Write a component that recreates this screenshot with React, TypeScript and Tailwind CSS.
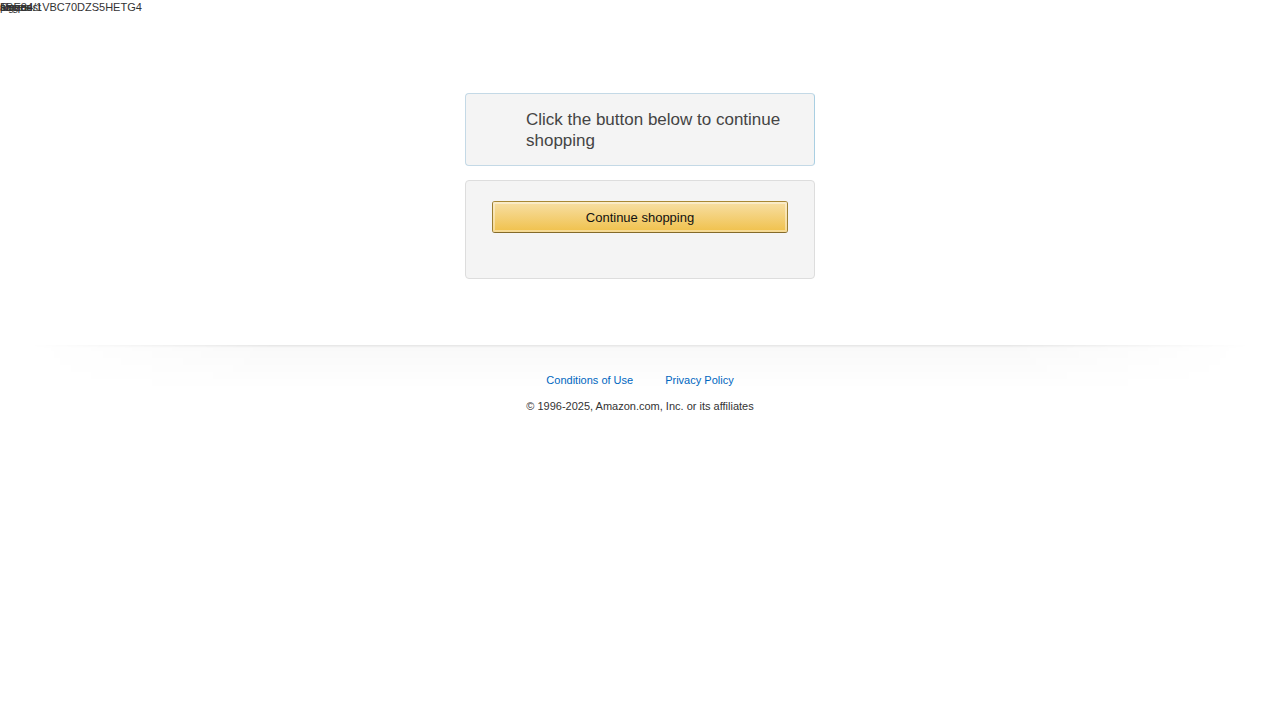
import React from "react";

export default function App() {
  return (
    <div className="relative min-h-[720px] bg-white text-[#111] font-['Liberation_Sans',Arial,sans-serif]">
      <div className="absolute left-0 top-0 text-[11px] leading-[14px] text-[#333]">
        <span className="absolute left-0 top-0 whitespace-nowrap">Request</span>
        <span className="absolute left-0 top-0 whitespace-nowrap">signed</span>
        <span className="absolute left-0 top-0 whitespace-nowrap">pages</span>
        <span className="absolute left-0 top-0 whitespace-nowrap">amzn</span>
        <span className="absolute left-0 top-0 whitespace-nowrap">1BE84/1VBC70DZS5HETG4</span>
      </div>

      <div className="pt-[93px] w-[350px] mx-auto">
        <div className="rounded-[4px] border border-[#c4d9e6] border-r-[#a9cfe2] bg-[#f4f4f4] pl-[60px] pr-[18px] pt-[15px] pb-[14px]">
          <p className="text-[17px] leading-[21px] text-[#444]">
            Click the button below to continue shopping
          </p>
        </div>

        <div className="mt-[14px] rounded-[4px] border border-[#dddddd] bg-[#f4f4f4] pt-[20px] pb-[45px] px-[26px]">
          <div className="rounded-[3px] border border-[#a88734] border-b-[#846a29] border-x-[#9c7e31]">
            <div className="flex h-[30px] items-center justify-center rounded-[2px] pt-[2px] bg-[linear-gradient(to_bottom,#f7dfa5,#f0c14b)] shadow-[inset_0_0_0_2px_rgba(255,255,255,0.4)] text-[13px] text-[#111]">
              Continue shopping
            </div>
          </div>
        </div>
      </div>

      <div className="mt-[66px] px-[30px]">
        <div className="h-[44px] -mb-[16px] bg-[linear-gradient(to_bottom,rgba(0,0,0,0.1),rgba(0,0,0,0.025)_3px,transparent)] [mask-image:linear-gradient(to_right,transparent,black_20%,black_80%,transparent)]" />
        <div className="relative flex justify-center gap-[32px] text-[11px] leading-[14px]">
          <a className="text-[#0066c0]">Conditions of Use</a>
          <a className="text-[#0066c0]">Privacy Policy</a>
        </div>
        <div className="mt-[12px] text-center text-[11px] leading-[14px] text-[#333]">
          © 1996-2025, Amazon.com, Inc. or its affiliates
        </div>
      </div>
    </div>
  );
}
